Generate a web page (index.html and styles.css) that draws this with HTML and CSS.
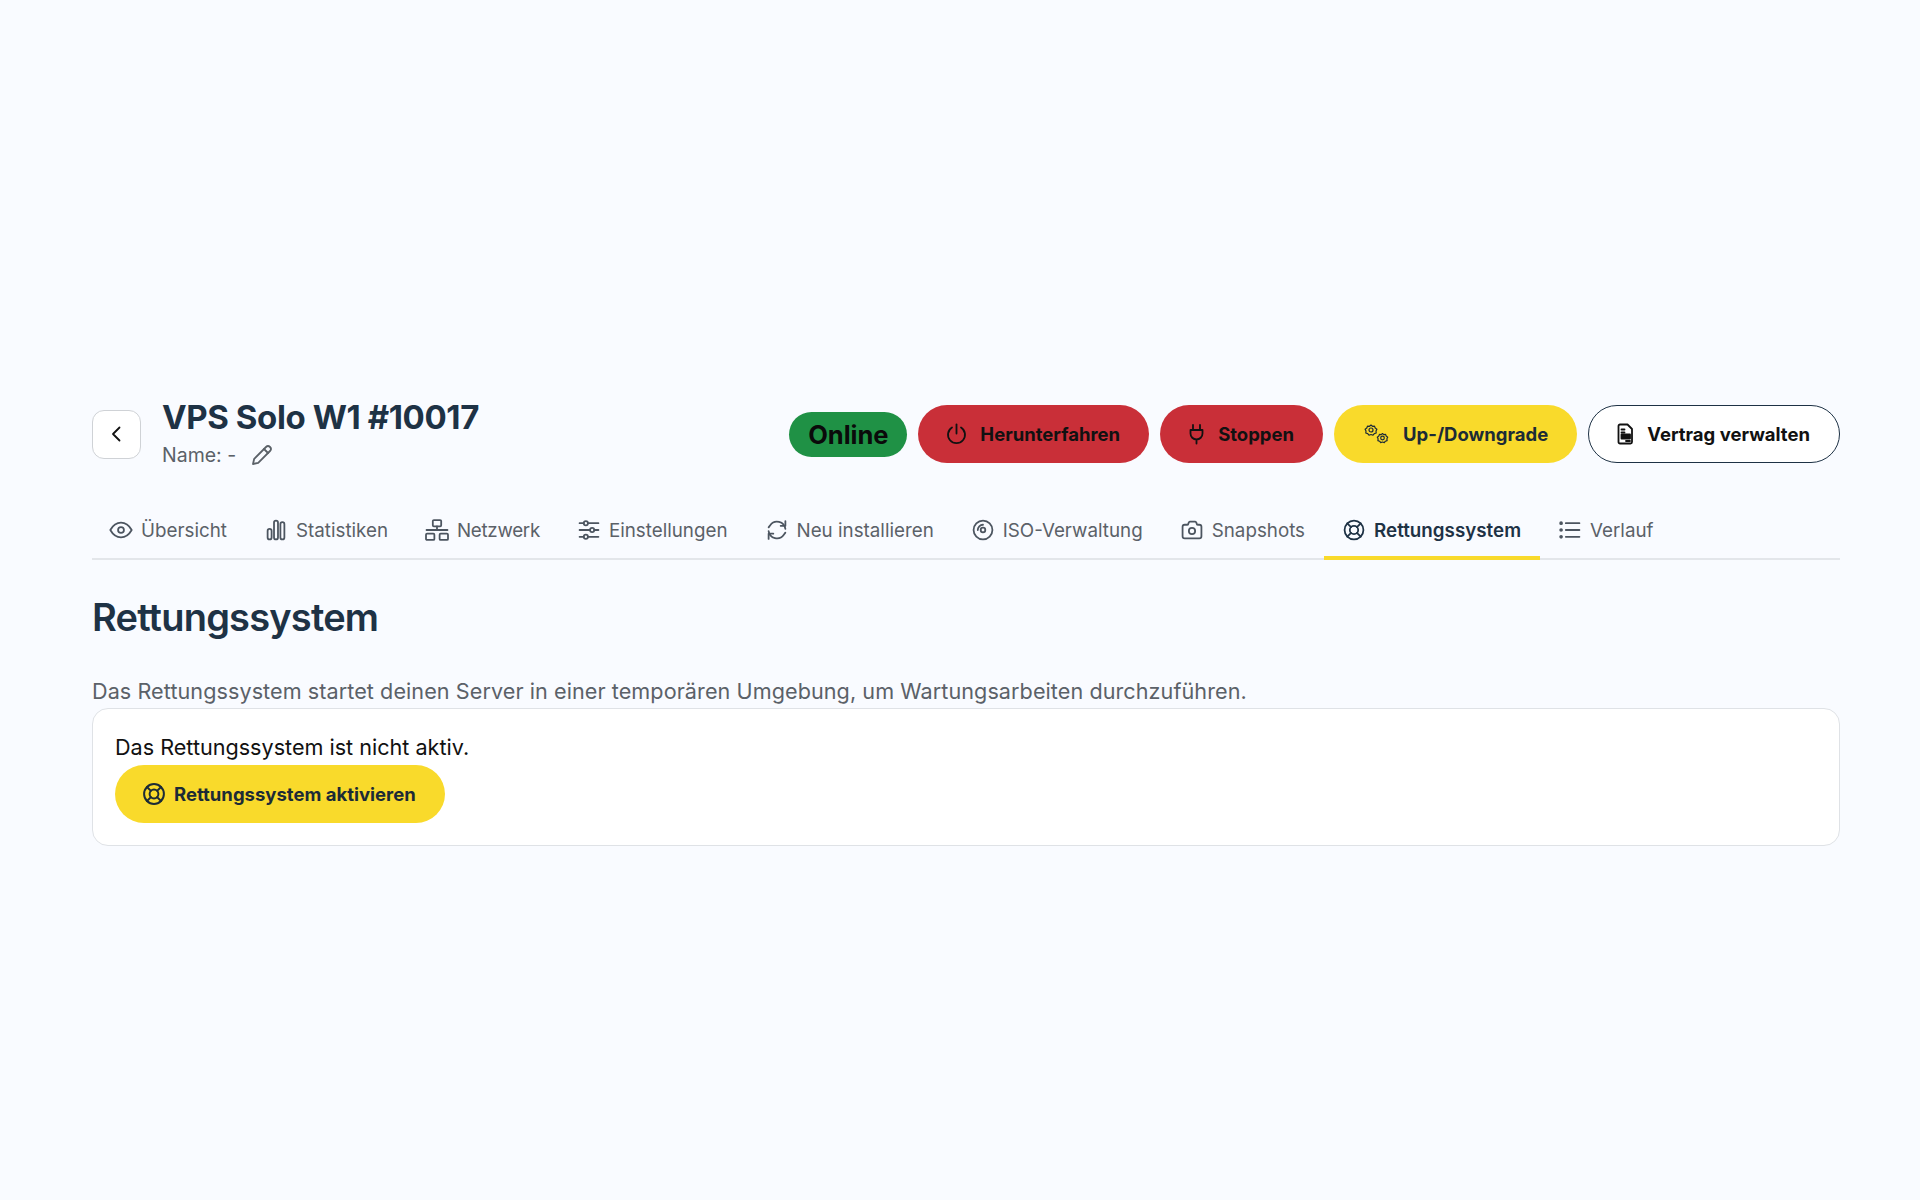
FILE: index.html
```html
<!DOCTYPE html>
<html lang="de">
<head>
    <meta charset="UTF-8">
    <meta name="viewport" content="width=device-width, initial-scale=1.0">
    <title>VPS Solo W1 #10017</title>
    <link rel="stylesheet" href="styles.css">
</head>
<body>
    <main class="page">
        <header class="server-header">
            <div class="server-title">
                <a href="#" class="back-btn">
                    <svg class="icon" viewBox="0 0 24 24"><path d="M14.500 5.500l-6.500 6.500l6.500 6.500"/></svg>
                </a>
                <div class="server-info">
                    <h1>VPS Solo W1 #10017</h1>
                    <div class="server-name">
                        <span>Name: -</span>
                        <svg class="icon" viewBox="0 0 24 24"><path d="M3 21l1.200-5.200l11.800-11.800a2.300 2.300 0 0 1 4 4l-11.800 11.800z"/><path d="M14 6l4 4"/></svg>
                    </div>
                </div>
            </div>
            <div class="server-actions">
                <span class="status">Online</span>
                <a href="#" class="btn btn-red">
                    <svg class="icon icon-power" viewBox="1.500 0 21 24"><path d="M7.500 5.500a8.500 8.500 0 1 0 9 0"/><path d="M12 2.500v9"/></svg>
                    Herunterfahren
                </a>
                <a href="#" class="btn btn-red">
                    <svg class="icon icon-narrow" viewBox="3.500 0 17 24"><path d="M8.500 3v5M15.500 3v5M6 8h12v3.500a6 6 0 0 1-12 0zM12 17.500v4"/></svg>
                    Stoppen
                </a>
                <a href="#" class="btn btn-yellow">
                    <svg class="icon icon-gears" viewBox="0 0 28 24"><circle cx="9" cy="8" r="2"/><path d="M9 3l1.500 1.300l2-.2l.7 1.900l1.700 1.200l-.9 1.800l.2 2l-1.900.6l-1.300 1.600l-2-.7l-2 .7l-1.300-1.600l-1.900-.6l.2-2l-.9-1.800l1.700-1.200l.7-1.900l2 .2z"/><circle cx="20.500" cy="16" r="1.800"/><path d="M20.500 11.500l1.300 1.100l1.800-.2l.6 1.700l1.500 1.100l-.8 1.600l.2 1.800l-1.700.6l-1.100 1.400l-1.800-.6l-1.800.6l-1.100-1.400l-1.700-.6l.2-1.800l-.8-1.600l1.500-1.100l.6-1.700l1.800.2z"/></svg>
                    Up-/Downgrade
                </a>
                <a href="#" class="btn btn-outline">
                    <svg class="icon icon-narrow" viewBox="3.500 0 17 24"><path d="M6.500 2.500h7.500l4.500 4.500v13a1.500 1.500 0 0 1-1.500 1.500h-10.500a1.500 1.500 0 0 1-1.500-1.500v-16a1.500 1.500 0 0 1 1.500-1.500z"/><path d="M8 7.500h3M8 10.500h3"/><path class="solid" d="M8 12.500h8.500v4h-8.500z"/><path d="M12.500 19h4"/></svg>
                    Vertrag verwalten
                </a>
            </div>
        </header>

        <nav class="tabs">
            <a href="#" class="tab">
                <svg class="icon" viewBox="1.500 1.500 21 21"><circle cx="12" cy="12" r="2.800"/><path d="M1.800 12c2.600-4.600 6-7 10.200-7s7.600 2.400 10.200 7c-2.600 4.600-6 7-10.200 7s-7.600-2.400-10.200-7"/></svg>
                Übersicht
            </a>
            <a href="#" class="tab">
                <svg class="icon" viewBox="1.500 1.500 21 21"><rect x="4" y="11" width="3.800" height="10" rx="1.900"/><rect x="10.100" y="3" width="3.800" height="18" rx="1.900"/><rect x="16.200" y="4.500" width="3.800" height="16.500" rx="1.900"/></svg>
                Statistiken
            </a>
            <a href="#" class="tab tab-tight">
                <svg class="icon" viewBox="1.500 1.500 21 21"><rect x="8" y="2.500" width="8" height="6" rx="1"/><rect x="1.500" y="15.500" width="8" height="6" rx="1"/><rect x="14.500" y="15.500" width="8" height="6" rx="1"/><path d="M2 12h20M12 8.500v3.500"/></svg>
                Netzwerk
            </a>
            <a href="#" class="tab">
                <svg class="icon" viewBox="1.500 1.500 21 21"><circle cx="9" cy="5.500" r="2"/><circle cx="15" cy="12" r="2"/><circle cx="9" cy="18.500" r="2"/><path d="M3 5.500h4M11 5.500h10M3 12h10M17 12h4M3 18.500h4M11 18.500h10"/></svg>
                Einstellungen
            </a>
            <a href="#" class="tab">
                <svg class="icon" viewBox="1.500 1.500 21 21"><path d="M20 11a8 8 0 0 0-14.500-3.500l-1.500 2"/><path d="M4 13a8 8 0 0 0 14.500 3.500l1.500-2"/><path d="M20 3.500v4.500h-4.500M4 20.500v-5h4.500"/></svg>
                Neu installieren
            </a>
            <a href="#" class="tab">
                <svg class="icon" viewBox="1.500 1.500 21 21"><circle cx="12" cy="12" r="9"/><circle cx="12" cy="12" r="2.200"/><path d="M7 12a5 5 0 0 1 5-5"/></svg>
                ISO-Verwaltung
            </a>
            <a href="#" class="tab">
                <svg class="icon" viewBox="1.500 1.500 21 21"><path d="M5 7h2.500a1 1 0 0 0 1-1l.5-1.200a1 1 0 0 1 1-.8h5a1 1 0 0 1 1 .8l.5 1.200a1 1 0 0 0 1 1h1.500a2 2 0 0 1 2 2v9a2 2 0 0 1-2 2h-14a2 2 0 0 1-2-2v-9a2 2 0 0 1 2-2"/><circle cx="12" cy="13" r="3"/></svg>
                Snapshots
            </a>
            <a href="#" class="tab active">
                <svg class="icon" viewBox="1.500 1.500 21 21"><circle cx="12" cy="12" r="9"/><circle cx="12" cy="12" r="4"/><path d="M5.600 5.600l3.600 3.600M18.400 5.600l-3.600 3.600M5.600 18.400l3.600-3.600M18.400 18.400l-3.600-3.600"/></svg>
                Rettungssystem
            </a>
            <a href="#" class="tab">
                <svg class="icon" viewBox="1.500 1.500 21 21"><path d="M8 5.500h13M8 12h13M8 18.500h13"/><path class="dots" d="M3.500 5.500h.01M3.500 12h.01M3.500 18.500h.01"/></svg>
                Verlauf
            </a>
        </nav>

        <section class="rescue">
            <h2>Rettungssystem</h2>
            <p class="intro">Das Rettungssystem startet deinen Server in einer temporären Umgebung, um Wartungsarbeiten durchzuführen.</p>
            <div class="card">
                <p>Das Rettungssystem ist nicht aktiv.</p>
                <a href="#" class="btn btn-yellow btn-activate">
                    <svg class="icon" viewBox="2 2 20 20"><circle cx="12" cy="12" r="9"/><circle cx="12" cy="12" r="4"/><path d="M5.600 5.600l3.600 3.600M18.400 5.600l-3.600 3.600M5.600 18.400l3.600-3.600M18.400 18.400l-3.600-3.600"/></svg>
                    Rettungssystem aktivieren
                </a>
            </div>
        </section>
    </main>
</body>
</html>
```

FILE: styles.css
```css
* {
    margin: 0;
    padding: 0;
    box-sizing: border-box;
}
body {
    min-height: 100vh;
    background-color: #f9fbff;
    color: #1e3245;
    font-family: "Inter", "Noto Sans", sans-serif;
}
a {
    color: inherit;
    text-decoration: none;
}
.icon {
    width: 24px;
    height: 24px;
    flex-shrink: 0;
    overflow: visible;
    fill: none;
    stroke: currentColor;
    stroke-width: 1.8;
    stroke-linecap: round;
    stroke-linejoin: round;
}
.icon .solid {
    fill: currentColor;
}
.icon .dots {
    stroke-width: 3.500;
}
.icon-power {
    width: 21px;
}
.icon-narrow {
    width: 17px;
}
.icon-gears {
    width: 28px;
    stroke-width: 1.200;
}
.page {
    padding: 398px 80px 0 92px;
}
.server-header {
    display: flex;
    justify-content: space-between;
    align-items: center;
    height: 72px;
}
.server-title {
    display: flex;
    align-items: center;
    gap: 21px;
}
.server-info {
    margin-top: 2px;
}
.back-btn {
    display: flex;
    justify-content: center;
    align-items: center;
    width: 49px;
    height: 49px;
    background-color: #fff;
    border: 1px solid #cfd2d6;
    border-radius: 12px;
    color: #111;
}
h1 {
    font-size: 33px;
    font-weight: 700;
    line-height: 38px;
    letter-spacing: -0.4px;
}
.server-name {
    display: flex;
    align-items: center;
    gap: 14px;
    height: 34px;
    margin-top: 2px;
    font-size: 19.500px;
    color: #5b6168;
}
.server-actions {
    display: flex;
    align-items: center;
    gap: 11px;
}
.status {
    display: flex;
    justify-content: center;
    align-items: center;
    width: 118px;
    height: 45px;
    background-color: #1f9145;
    border-radius: 23px;
    color: #0a0a0a;
    font-size: 25.500px;
    font-weight: 700;
}
.btn {
    display: flex;
    align-items: center;
    gap: 13px;
    height: 58px;
    padding: 0 29px 0 28px;
    border-radius: 29px;
    color: #111;
    font-size: 18.500px;
    font-weight: 700;
}
.btn-red {
    background-color: #c92f38;
}
.btn-yellow {
    background-color: #f9da2b;
    color: #1c2b36;
}
.btn-outline {
    background-color: #fff;
    border: 1.500px solid #1e3245;
}
.tabs {
    display: flex;
    margin-top: 30px;
    height: 60px;
    border-bottom: 2px solid #e3e6ea;
}
.tab {
    display: flex;
    align-items: center;
    gap: 9px;
    height: 60px;
    padding: 0 19px;
    color: #5b6168;
    font-size: 18.800px;
}
.tab:first-child {
    padding-left: 18px;
}
.tab-tight {
    letter-spacing: -0.3px;
}
.tab .icon {
    width: 22px;
    height: 22px;
    stroke-width: 1.700;
    color: #4c5560;
}
.tab.active {
    border-bottom: 4px solid #f9da2b;
    padding-top: 4px;
    color: #1e3245;
    font-weight: 600;
}
.tab.active .icon {
    color: #1e3245;
}
h2 {
    margin-top: 34px;
    font-size: 38px;
    font-weight: 600;
    line-height: 46px;
    letter-spacing: -0.800px;
}
.intro {
    margin-top: 36px;
    font-size: 21.600px;
    line-height: 30px;
    letter-spacing: 0.07px;
    color: #5b6168;
}
.card {
    margin-top: 2px;
    padding: 23px 22px 22px;
    background-color: #fff;
    border: 1.500px solid #dfe2e6;
    border-radius: 16px;
}
.card p {
    font-size: 21.600px;
    line-height: 30px;
    color: #111;
}
.btn-activate {
    display: inline-flex;
    gap: 9px;
    margin-top: 3px;
}
.btn-activate .icon {
    width: 22px;
    height: 22px;
}
```
